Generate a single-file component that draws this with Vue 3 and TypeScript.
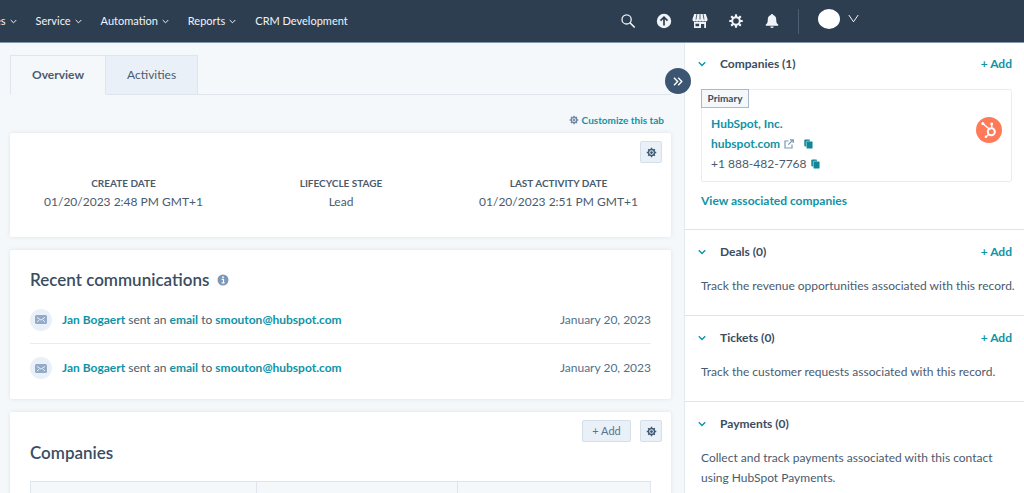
<script setup lang="ts">
import { ref } from 'vue'

interface NavItem { label: string; menu: boolean }
interface Fact { label: string; value: string }
interface Message { id: number; from: string; to: string; date: string }
interface Association { title: string; text: string; canAdd: boolean }

const nav: NavItem[] = [
  { label: 'es', menu: true },
  { label: 'Service', menu: true },
  { label: 'Automation', menu: true },
  { label: 'Reports', menu: true },
  { label: 'CRM Development', menu: false },
]

const tabs = ['Overview', 'Activities']
const activeTab = ref('Overview')

const facts: Fact[] = [
  { label: 'CREATE DATE', value: '01/20/2023 2:48 PM GMT+1' },
  { label: 'LIFECYCLE STAGE', value: 'Lead' },
  { label: 'LAST ACTIVITY DATE', value: '01/20/2023 2:51 PM GMT+1' },
]

const messages: Message[] = [
  { id: 1, from: 'Jan Bogaert', to: 'smouton@hubspot.com', date: 'January 20, 2023' },
  { id: 2, from: 'Jan Bogaert', to: 'smouton@hubspot.com', date: 'January 20, 2023' },
]

const associations: Association[] = [
  { title: 'Deals (0)', text: 'Track the revenue opportunities associated with this record.', canAdd: true },
  { title: 'Tickets (0)', text: 'Track the customer requests associated with this record.', canAdd: true },
  { title: 'Payments (0)', text: 'Collect and track payments associated with this contact using HubSpot Payments.', canAdd: false },
]

const teeth = [0, 45, 90, 135, 180, 225, 270, 315]
const gearSpokes = 'M6 .8v2M6 9.200v2M.8 6h2M9.200 6h2M2.400 2.400l1.400 1.400M8.200 8.200l1.400 1.400M9.600 2.400L8.200 3.800M3.800 8.200L2.400 9.600M6 4.500v3M4.500 6h3'
</script>

<template>
  <div class="app">
    <header class="topbar">
      <nav class="nav" aria-label="Main">
        <button v-for="item in nav" :key="item.label" class="nav-item" type="button">
          {{ item.label }}
          <svg v-if="item.menu" class="nav-chevron" viewBox="0 0 7 5" aria-hidden="true"><path d="M.7 1l2.800 2.800L6.300 1" /></svg>
        </button>
      </nav>
      <div class="tools">
        <button class="tool" type="button" aria-label="Search">
          <svg viewBox="0 0 16 16"><g fill="none" stroke="currentColor" stroke-linecap="round"><circle cx="6.600" cy="6.400" r="4.600" stroke-width="1.300" /><path d="M10.200 10l4 4" stroke-width="1.700" /></g></svg>
        </button>
        <button class="tool" type="button" aria-label="Upgrades">
          <svg viewBox="0 0 16 16"><circle cx="8" cy="8" r="7.200" fill="currentColor" /><path d="M8 12.500V4.300M4.500 7.600L8 4.100l3.500 3.500" fill="none" stroke="#2d3e50" stroke-width="1.700" /></svg>
        </button>
        <button class="tool" type="button" aria-label="Marketplace">
          <svg viewBox="0 0 16 16">
            <path fill="currentColor" d="M2.200 1h11.600L15.500 6v1a1.700 1.700 0 0 1-3 .8 1.800 1.800 0 0 1-3 0 1.800 1.800 0 0 1-3 0 1.800 1.800 0 0 1-3 0A1.700 1.700 0 0 1 .5 7V6z" />
            <path d="M4.900 1L4 6.500M8 1v5.500M11.100 1L12 6.500" stroke="#2d3e50" stroke-width=".8" />
            <path fill="currentColor" fill-rule="evenodd" d="M2 8.800h12V15h-1.800v-4H9v4H2zM3.500 10.700v2.500h3.600v-2.500z" />
          </svg>
        </button>
        <button class="tool" type="button" aria-label="Settings">
          <svg viewBox="0 0 16 16">
            <circle cx="8" cy="8" r="3.800" fill="none" stroke="currentColor" stroke-width="2" />
            <rect v-for="a in teeth" :key="a" x="6.900" y="1.200" width="2.200" height="2.800" rx=".6" fill="currentColor" :transform="`rotate(${a} 8 8)`" />
          </svg>
        </button>
        <button class="tool" type="button" aria-label="Notifications">
          <svg viewBox="0 0 16 16"><path fill="currentColor" d="M8 1a1.200 1.200 0 0 0-1.200 1.100C4.700 2.700 3.800 4.400 3.800 6.400c0 3.200-.7 4.200-2 5.100v1.200h12.400v-1.200c-1.300-.9-2-1.900-2-5.100 0-2-.9-3.700-3-4.300A1.200 1.200 0 0 0 8 1zM6.300 13.400a1.700 1.700 0 0 0 3.400 0z" /></svg>
        </button>
        <span class="divider"></span>
        <button class="account" type="button" aria-label="Account">
          <span class="avatar"></span>
          <svg viewBox="0 0 11 9" aria-hidden="true"><path d="M.8 1l4.700 6.800L10.200 1" fill="none" stroke="currentColor" /></svg>
        </button>
      </div>
    </header>

    <div class="body">
      <main class="main">
        <div class="tabs" role="tablist">
          <button
            v-for="tab in tabs" :key="tab" type="button" role="tab"
            class="tab" :class="{ active: tab === activeTab }"
            :aria-selected="tab === activeTab" @click="activeTab = tab"
          >{{ tab }}</button>
        </div>

        <div class="customize">
          <svg class="gear" viewBox="0 0 12 12" aria-hidden="true"><circle cx="6" cy="6" r="3.300" /><path :d="gearSpokes" /></svg>
          <a class="link small" href="#customize">Customize this tab</a>
        </div>

        <section class="card facts-card">
          <button class="square" type="button" aria-label="Configure card">
            <svg class="gear" viewBox="0 0 12 12"><circle cx="6" cy="6" r="3.300" /><path :d="gearSpokes" /></svg>
          </button>
          <dl class="facts">
            <div v-for="fact in facts" :key="fact.label" class="fact">
              <dt>{{ fact.label }}</dt>
              <dd>{{ fact.value }}</dd>
            </div>
          </dl>
        </section>

        <section class="card comms">
          <h2>
            Recent communications
            <svg class="info" viewBox="0 0 12 12" aria-hidden="true"><circle cx="6" cy="6" r="5.500" fill="#7c98b6" /><path d="M4.700 5.300h1.800v3.400M4.600 8.800h3" fill="none" stroke="#fff" stroke-width="1.200" /><circle cx="6" cy="3.200" r=".9" fill="#fff" /></svg>
          </h2>
          <ul>
            <li v-for="m in messages" :key="m.id">
              <span class="mail">
                <svg viewBox="0 0 12 9" aria-hidden="true"><rect width="12" height="9" rx="1.500" fill="#93abc9" /><path d="M2 2.400l4 2.700 4-2.700M2 7l2.300-2M10 7L7.700 5" fill="none" stroke="#eaf0f8" /></svg>
              </span>
              <p><a class="link" href="#contact">{{ m.from }}</a> sent an <a class="link" href="#email">email</a> to <a class="link" href="#recipient">{{ m.to }}</a></p>
              <time>{{ m.date }}</time>
            </li>
          </ul>
        </section>

        <section class="card companies">
          <div class="actions">
            <button class="add-button" type="button">+ Add</button>
            <button class="square" type="button" aria-label="Configure companies">
              <svg class="gear" viewBox="0 0 12 12"><circle cx="6" cy="6" r="3.300" /><path :d="gearSpokes" /></svg>
            </button>
          </div>
          <h2>Companies</h2>
          <table aria-label="Companies">
            <colgroup><col class="wide"><col class="medium"><col></colgroup>
            <thead><tr><th></th><th></th><th></th></tr></thead>
          </table>
        </section>
      </main>

      <aside class="side">
        <button class="collapse" type="button" aria-label="Collapse sidebar">
          <svg viewBox="0 0 10 9" aria-hidden="true"><path d="M1 .8l3.600 3.700L1 8.200M5.200.8l3.600 3.700-3.600 3.700" fill="none" stroke="currentColor" stroke-width="1.400" /></svg>
        </button>

        <section class="assoc first">
          <div class="assoc-head">
            <svg class="chevron" viewBox="0 0 8 6" aria-hidden="true"><path d="M.8 1.200L4 4.400l3.200-3.200" /></svg>
            <h3>Companies (1)</h3>
            <button class="link add" type="button">+ Add</button>
          </div>
          <div class="company">
            <span class="badge">Primary</span>
            <div class="company-row">
              <div class="company-info">
                <a class="link" href="#company">HubSpot, Inc.</a>
                <div class="line">
                  <a class="link" href="#site">hubspot.com</a>
                  <svg class="ext" viewBox="0 0 10 10" aria-hidden="true"><path d="M4.500 2H1v7h7V5.500M6 .8h3.300V4M9 1L4.300 5.700" fill="none" stroke="currentColor" stroke-width="1.200" /></svg>
                  <svg class="copy after-ext" viewBox="0 0 9 10" aria-hidden="true"><rect x=".3" y=".5" width="5.700" height="7" rx="1" /><rect x="2.300" y="2.200" width="6.500" height="7.600" rx="1" stroke="#fff" stroke-width=".5" /></svg>
                </div>
                <div class="line">
                  <span>+1 888-482-7768</span>
                  <svg class="copy" viewBox="0 0 9 10" aria-hidden="true"><rect x=".3" y=".5" width="5.700" height="7" rx="1" /><rect x="2.300" y="2.200" width="6.500" height="7.600" rx="1" stroke="#fff" stroke-width=".5" /></svg>
                </div>
              </div>
              <svg class="logo" viewBox="0 0 26 26" role="img" aria-label="HubSpot">
                <circle cx="13" cy="13" r="13" fill="#ff7a59" />
                <g fill="none" stroke="#fff">
                  <circle cx="15.300" cy="14.800" r="3.500" stroke-width="2" />
                  <path d="M15.700 7.500v3.500M7 6.700l5.900 5M12.700 17.200l-2.300 2.300" stroke-width="1.500" />
                </g>
                <g fill="#fff"><circle cx="6.800" cy="6.600" r="1.500" /><circle cx="15.700" cy="7" r="1.400" /><circle cx="10" cy="19.800" r="1.300" /></g>
              </svg>
            </div>
          </div>
          <a class="link" href="#companies">View associated companies</a>
        </section>

        <section v-for="a in associations" :key="a.title" class="assoc">
          <div class="assoc-head">
            <svg class="chevron" viewBox="0 0 8 6" aria-hidden="true"><path d="M.8 1.200L4 4.400l3.200-3.200" /></svg>
            <h3>{{ a.title }}</h3>
            <button v-if="a.canAdd" class="link add" type="button">+ Add</button>
          </div>
          <p>{{ a.text }}</p>
        </section>
      </aside>
    </div>
  </div>
</template>

<style>
body { margin: 0; }
</style>

<style scoped>
.app {
  display: flex;
  flex-direction: column;
  height: 100vh;
  overflow: hidden;
  background: #f5f8fa;
  color: #4a5b6e;
  font-family: Lato, "Liberation Sans", sans-serif;
  font-size: 12px;
  line-height: 20px;
}
* { box-sizing: border-box; }
h2, h3, p, ul, dl, dd { margin: 0; padding: 0; }
button { font: inherit; color: inherit; border: 0; padding: 0; background: none; cursor: pointer; }
svg { display: block; flex: none; }

.topbar {
  flex: none;
  display: flex;
  justify-content: space-between;
  align-items: center;
  height: 43px;
  padding-right: 165px;
  background: #2d3e50;
  border-bottom: 1px solid #8296ac;
  color: #f0f4f8;
}
.nav { display: flex; gap: 19px; margin-left: -5px; font-size: 11px; }
.nav-item { display: flex; align-items: center; gap: 4px; white-space: nowrap; }
.nav-chevron { width: 7px; height: 5px; fill: none; stroke: currentColor; }
.tools { display: flex; align-items: center; gap: 20px; }
.tool svg { width: 16px; height: 16px; }
.divider { width: 1px; height: 25px; margin: 0 -1px 0 -2px; background: #4c6075; }
.account { display: flex; align-items: center; gap: 8px; margin-bottom: 5px; }
.account svg { width: 11px; height: 9px; }
.avatar { width: 22px; height: 20px; border-radius: 50%; background: #fff; }

.body { flex: 1; display: grid; grid-template-columns: minmax(0, 1fr) 340px; min-height: 0; }
.main { padding: 12px 13px 0 10px; }

.tabs { display: flex; height: 40px; border-bottom: 1px solid #dfe5ed; }
.tab { height: 40px; padding: 0 21px; border: 1px solid #dfe5ed; border-left: 0; background: #eaf0f8; }
.tab.active { background: #f5f8fa; border-left: 1px solid #dfe5ed; border-bottom-color: #f5f8fa; font-weight: 700; }

.gear { fill: none; stroke: currentColor; stroke-width: 1.600; }
.customize { display: flex; justify-content: flex-end; align-items: center; gap: 3px; height: 38px; padding: 11px 7px 0 0; line-height: 16px; }
.customize .gear { width: 10px; height: 10px; color: #7289a5; }
.small { font-size: 10px; }
.link { color: #0f93a6; font-weight: 700; text-decoration: none; }

.card { margin-bottom: 13px; padding: 8px 20px 0; background: #fff; border-radius: 2px; box-shadow: 0 0 4px #dce3eb; }
.square { display: grid; place-items: center; width: 22px; height: 22px; background: #eaf0f8; border: 1px solid #d5dfea; border-radius: 2px; color: #425b76; }
.square .gear { width: 11px; height: 11px; }
.facts-card { padding: 8px 9px 25px 10px; }
.facts-card .square { margin-left: auto; }
.facts { display: grid; grid-template-columns: 207px 1fr 207px; padding-top: 11px; text-align: center; }
.fact dt { font-size: 10px; font-weight: 700; line-height: 18px; }

h2 { display: flex; align-items: center; gap: 8px; font-size: 17px; font-weight: 600; line-height: 22px; color: #3b4d61; }
.comms { padding: 19px 20px 7px; }
.info { width: 12px; height: 12px; }
ul { padding-top: 5px; list-style: none; }
li { display: flex; align-items: center; gap: 10px; height: 48px; border-bottom: 1px solid #e8edf3; }
li:last-child { border-bottom: 0; }
.mail { display: grid; place-items: center; width: 22px; height: 22px; border-radius: 50%; background: #eaf0f8; }
.mail svg { width: 12px; height: 9px; }
time { margin-left: auto; color: #516f90; }

.actions { display: flex; justify-content: flex-end; gap: 9px; margin-right: -11px; }
.add-button { width: 49px; height: 22px; font-size: 11px; line-height: 20px; background: #eaf0f8; border: 1px solid #d5dfea; border-radius: 2px; color: #5b7390; }
table { width: 100%; margin-top: 17px; border-collapse: collapse; table-layout: fixed; }
.wide { width: 226px; }
.medium { width: 201px; }
th { height: 36px; background: #f5f8fa; border: 1px solid #dfe5ed; }

.side { position: relative; background: #fff; border-left: 1px solid #e3e9f0; }
.collapse { position: absolute; top: 25px; left: -20px; display: grid; place-items: center; width: 26px; height: 26px; border-radius: 50%; background: #3b5573; color: #fff; }
.collapse svg { width: 10px; height: 9px; }
.assoc { padding: 12px 12px 19px 16px; border-bottom: 1px solid #dfe3eb; }
.assoc.first { padding: 11px 12px 18px 16px; }
.assoc-head { display: flex; align-items: center; margin-bottom: 14px; padding-left: 1px; }
.first .assoc-head { margin-bottom: 15px; }
.assoc p { margin-right: -6px; }
.chevron { width: 8px; height: 6px; margin: 0 14px 0 -4px; fill: none; stroke: #0f93a6; stroke-width: 1.400; }
h3 { font-size: 12px; font-weight: 700; color: #3b4d61; }
.add { margin-left: auto; }
.company { height: 93px; margin-bottom: 9px; border: 1px solid #e8edf3; border-radius: 2px; }
.badge { display: block; width: 48px; height: 19px; margin: -1px; border: 1px solid #a9b8ca; background: #f5f8fa; font-size: 10px; font-weight: 700; line-height: 17px; text-align: center; color: #3b4d61; }
.company-row { display: flex; justify-content: space-between; padding: 7px 9px 0 9px; }
.company-info { display: flex; flex-direction: column; }
.logo { width: 26px; height: 26px; margin-top: 3px; }
.line { display: flex; align-items: center; gap: 4px; }
.ext { width: 10px; height: 10px; color: #7c98b6; }
.copy { width: 9px; height: 10px; fill: #0f8799; }
.after-ext { margin-left: 6px; }
</style>
